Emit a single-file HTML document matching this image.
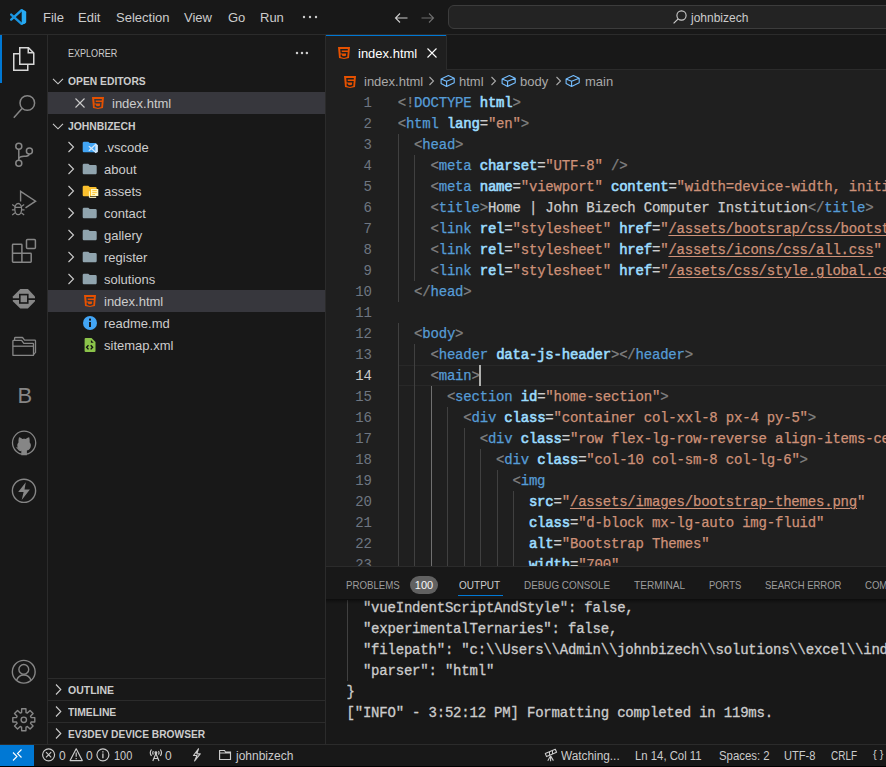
<!DOCTYPE html>
<html><head><meta charset="utf-8">
<style>
*{margin:0;padding:0;box-sizing:border-box}
html,body{width:886px;height:767px;overflow:hidden;background:#000}
body{position:relative;font-family:"Liberation Sans",sans-serif;font-size:13px;color:#cccccc}
.a{position:absolute}
#title{left:0;top:0;width:886px;height:34px;background:#181818}
#tb-border{left:0;top:34px;width:886px;height:1px;background:#2b2b2b}
#act{left:0;top:35px;width:47px;height:709px;background:#181818}
#act-border{left:47px;top:35px;width:1px;height:709px;background:#2b2b2b}
#side{left:48px;top:35px;width:277px;height:709px;background:#181818}
#side-border{left:325px;top:35px;width:1px;height:709px;background:#2b2b2b}
#editor{left:326px;top:35px;width:560px;height:531px;background:#1f1f1f}
#panel{left:326px;top:566px;width:560px;height:178px;background:#181818;border-top:1px solid #2b2b2b}
#status{left:0;top:744px;width:886px;height:22px;background:#181818;border-top:1px solid #2b2b2b}
#bottom{left:0;top:766px;width:886px;height:1px;background:#000}
.menu{top:1px;height:34px;line-height:34px;font-size:13px;color:#cccccc}
.sh{transform-origin:0 50%;font-size:11px;font-weight:bold;height:22px;line-height:22px;color:#cccccc;white-space:nowrap}
.row{height:22px;line-height:24px;font-size:13px;color:#cccccc;white-space:nowrap}
.code{-webkit-text-stroke-width:0.25px;font-size:14px;letter-spacing:-0.2px;line-height:21px;white-space:pre}
.cl{height:21px;white-space:pre}
.pt{transform-origin:0 50%;top:568px;height:35px;line-height:35px;font-size:11px;white-space:nowrap}
.st{transform-origin:0 50%;top:746px;height:21px;line-height:21px;font-size:12px;color:#cccccc;white-space:nowrap}
.mono{font-family:"Liberation Mono",monospace}
</style></head><body>
<div id="title" class="a"></div>
<div id="tb-border" class="a"></div>
<div id="act" class="a"></div>
<div id="act-border" class="a"></div>
<div id="side" class="a"></div>
<div id="side-border" class="a"></div>
<div id="editor" class="a"></div>
<div id="panel" class="a"></div>
<div id="status" class="a"></div>
<div id="bottom" class="a"></div>
<!-- TITLE BAR -->
<svg class="a" style="left:0;top:0" width="34" height="34" viewBox="0 0 34 34">
<path d="M21.6 10.2 11.2 19.6" stroke="#1d9ce8" stroke-width="2.4" stroke-linecap="round"/>
<path d="M21.6 23.8 11.2 14.6" stroke="#1a94e0" stroke-width="2.4" stroke-linecap="round"/>
<path d="M21.7 9.1 25.4 10.9Q26.2 11.3 26.2 12.2V22Q26.2 22.9 25.4 23.3L21.7 25.1Z" fill="#27aaf3"/>
</svg>
<div class="a menu" style="left:43px">File</div>
<div class="a menu" style="left:78px">Edit</div>
<div class="a menu" style="left:116px">Selection</div>
<div class="a menu" style="left:184px">View</div>
<div class="a menu" style="left:228px">Go</div>
<div class="a menu" style="left:260px">Run</div>
<svg class="a" style="left:302px;top:15px" width="16" height="4"><circle cx="2" cy="2" r="1.2" fill="#cccccc"/><circle cx="8" cy="2" r="1.2" fill="#cccccc"/><circle cx="14" cy="2" r="1.2" fill="#cccccc"/></svg>
<svg class="a" style="left:393px;top:10px" width="16" height="16" viewBox="0 0 16 16"><path d="M2.5 8h12M7 3.5 2.5 8 7 12.5" stroke="#cccccc" stroke-width="1.1" fill="none"/></svg>
<svg class="a" style="left:420px;top:10px" width="16" height="16" viewBox="0 0 16 16"><path d="M1.5 8h12M9 3.5 13.5 8 9 12.5" stroke="#6e6e6e" stroke-width="1.1" fill="none"/></svg>
<div class="a" style="left:448px;top:5px;width:560px;height:24px;border:1px solid #3c3c3c;border-radius:6px;background:#232323"></div>
<svg class="a" style="left:672px;top:9px" width="16" height="16" viewBox="0 0 16 16"><circle cx="9.5" cy="6.5" r="4.6" stroke="#cccccc" stroke-width="1.1" fill="none"/><path d="M6.2 9.8 1.6 14.4" stroke="#cccccc" stroke-width="1.2"/></svg>
<div class="a menu" style="left:691px;top:1px;height:34px;line-height:34px;font-size:12px">johnbizech</div>
<!-- ACTIVITY BAR -->
<div class="a" style="left:0;top:35px;width:2px;height:48px;background:#0078d4"></div>
<svg class="a" style="left:0;top:0" width="47" height="744" viewBox="0 0 47 744" fill="none" stroke="#868686" stroke-width="1.5">
<g stroke="#d7d7d7">
<path d="M19.75 64.25V47.75H28.5L33.75 53V64.25Z"/>
<path d="M28.25 47.75V52.75H33.75"/>
<path d="M19.75 53.75H13.75V70.25H27.75V64.25"/>
</g>
<circle cx="27.3" cy="103" r="7.3"/>
<path d="M22 108.5 13.8 117.8"/>
<circle cx="18.8" cy="146.3" r="3"/>
<circle cx="29.4" cy="151" r="3"/>
<circle cx="18.8" cy="163.2" r="3"/>
<path d="M18.8 149.3V160.2"/>
<path d="M18.8 158.5C19.5 156.8 21 156.3 24 156.3 27 156.3 29 155.5 29.4 154"/>
<path d="M20.6 201.5V191.3L35.6 201.2 25.5 207.8" stroke-width="1.4"/>
<ellipse cx="18.2" cy="209.1" rx="3.4" ry="5.6" stroke-width="1.3"/>
<path d="M14.9 207.4H21.5M12.2 204.4 15.1 206.4M24.2 204.4 21.3 206.4M11.9 209.8H14.8M24.5 209.8H21.6M12.2 214.9 15.1 212.7M24.2 214.9 21.3 212.7" stroke-width="1.2"/>
<path d="M13.2 244.3H21.2Q21.9 244.3 21.9 245V253.3H30.5Q31.2 253.3 31.2 254V261.6Q31.2 262.3 30.5 262.3H13.2Q12.5 262.3 12.5 261.6V245Q12.5 244.3 13.2 244.3ZM12.5 253.3H21.9V262.3"/>
<rect x="26.5" y="239.6" width="8.9" height="8.9" rx="1"/>
<g fill="#868686" stroke="none">
<path d="M20.3 289.1H27.9L35 296.6V298.3H12.8V296.6Z"/>
<path d="M12.8 299.9H35V301.2L27.9 308.5H20.3L12.8 301.2Z"/>
</g>
<rect x="19.8" y="294.6" width="8" height="8.4" fill="#868686" stroke="#181818" stroke-width="1.6"/>
<path d="M12.9 355.3V341.2Q12.9 340.4 13.7 340.4H21.6L23.8 343.3H32.7Q33.5 343.3 33.5 344.1V355.3Z" stroke-width="1.3" stroke-linejoin="round"/>
<path d="M12.9 346.2H33.5" stroke-width="1.3"/>
<path d="M14.6 340.2V338.3Q14.6 337.5 15.4 337.5H22.5L24.6 340.1H34.7Q35.5 340.1 35.5 340.9V352.4L33.5 354.6" stroke-width="1.3" stroke-linejoin="round"/>
<circle cx="24.1" cy="442.8" r="11.6" stroke-width="1.3"/>
<path fill="#868686" stroke="none" d="M21.3 455.2V450.6C18.8 450 17.3 448.2 17.3 445.5 17.3 444.2 17.8 443 18.6 442.2 18.4 441.3 18.4 439.7 19 437.2 20.5 437.5 21.7 438.3 22.4 439 23.5 438.7 24.7 438.7 25.8 439 26.5 438.3 27.7 437.5 29.2 437.2 29.8 439.7 29.8 441.3 29.6 442.2 30.4 443 30.9 444.2 30.9 445.5 30.9 448.2 29.4 450 26.9 450.6V455.2Z"/>
<path d="M16.5 447.5C18 447.8 18.5 449.5 19.5 450.2 20.2 450.6 21 450.6 21.5 450.5" stroke-width="1.2"/>
<circle cx="24" cy="490.8" r="11.6" stroke-width="1.4"/>
<path fill="#868686" stroke="none" d="M25.8 482.2 18.2 491.9H23.6L21.7 500.1 29.9 489.6H24.5Z"/>
<circle cx="23.75" cy="671.75" r="11.4" stroke-width="1.4"/>
<circle cx="23.8" cy="669.4" r="4.9" stroke-width="1.4"/>
<path d="M16.6 680.3C17.8 677 20.4 675 23.8 675 27.2 675 29.8 677 31 680.3" stroke-width="1.4"/>
<path stroke-width="1.4" stroke-linejoin="round" d="M21.58 712.53 L21.66 708.81 L25.94 708.81 L26.02 712.53 L27.37 713.09 L30.06 710.51 L33.09 713.54 L30.51 716.23 L31.07 717.58 L34.79 717.66 L34.79 721.94 L31.07 722.02 L30.51 723.37 L33.09 726.06 L30.06 729.09 L27.37 726.51 L26.02 727.07 L25.94 730.79 L21.66 730.79 L21.58 727.07 L20.23 726.51 L17.54 729.09 L14.51 726.06 L17.09 723.37 L16.53 722.02 L12.81 721.94 L12.81 717.66 L16.53 717.58 L17.09 716.23 L14.51 713.54 L17.54 710.51 L20.23 713.09Z"/>
<circle cx="23.8" cy="719.8" r="2.7" stroke-width="1.4"/>
</svg>
<div class="a" style="left:17.5px;top:380.5px;font-size:22px;line-height:30px;color:#868686">B</div>
<!-- SIDEBAR -->
<div class="a sh" style="left:68px;top:35px;height:35px;line-height:36px;font-weight:normal;transform:scaleX(0.822)">EXPLORER</div>
<svg class="a" style="left:294px;top:51px" width="16" height="4"><circle cx="3" cy="2" r="1.25" fill="#cccccc"/><circle cx="8" cy="2" r="1.25" fill="#cccccc"/><circle cx="12.9" cy="2" r="1.25" fill="#cccccc"/></svg>
<svg class="a" style="left:52px;top:77px" width="12" height="8" viewBox="0 0 12 8"><path d="M1 1.8 6 6.8 11 1.8" stroke="#cccccc" stroke-width="1.1" fill="none"/></svg>
<div class="a sh" style="left:68px;top:70px;transform:scaleX(0.937)">OPEN EDITORS</div>
<div class="a" style="left:48px;top:92px;width:277px;height:22px;background:#37373d"></div>
<svg class="a" style="left:74px;top:97px" width="12" height="12" viewBox="0 0 12 12"><path d="M1.5 1.5 10.5 10.5M10.5 1.5 1.5 10.5" stroke="#cccccc" stroke-width="1.1"/></svg>
<svg class="a" style="left:90px;top:95px" width="16" height="16" viewBox="0 0 32 32"><path fill="#e65100" d="m4 4 2 22 10 2 10-2 2-22Zm19.72 7H11.28l.29 3h11.86l-.88 9.98L16 25.93l-6.54-1.95L9.02 19h2.93l.22 2.42L16 22.7l3.84-1.28.4-4.42H9.28l-.87-9H23.6Z"/></svg>
<div class="a row" style="left:112px;top:92px">index.html</div>
<svg class="a" style="left:52px;top:122px" width="12" height="8" viewBox="0 0 12 8"><path d="M1 1.8 6 6.8 11 1.8" stroke="#cccccc" stroke-width="1.1" fill="none"/></svg>
<div class="a sh" style="left:68px;top:115px;transform:scaleX(0.944)">JOHNBIZECH</div>

<svg class="a" style="left:0;top:0" width="326" height="744" viewBox="0 0 326 744">
<g stroke="#cccccc" stroke-width="1.1" fill="none">
<path d="M68.5 142 73.5 147 68.5 152"/>
<path d="M68.5 164 73.5 169 68.5 174"/>
<path d="M68.5 186 73.5 191 68.5 196"/>
<path d="M68.5 208 73.5 213 68.5 218"/>
<path d="M68.5 230 73.5 235 68.5 240"/>
<path d="M68.5 252 73.5 257 68.5 262"/>
<path d="M68.5 274 73.5 279 68.5 284"/>
<path d="M56 684.5 60.8 689.5 56 694.5"/>
<path d="M56 706.5 60.8 711.5 56 716.5"/>
<path d="M56 728.5 60.8 733.5 56 738.5"/>
</g>
<g transform="translate(81.3 139) scale(0.7 0.6667)"><path d="M10 4H4c-1.11 0-2 .89-2 2v12c0 1.097.903 2 2 2h16c1.097 0 2-.903 2-2V8a2 2 0 0 0-2-2h-8l-2-2z" fill="#42a5f5"/></g><path d="M95.6 144.6 89.2 150.4M95.6 152.2 89.2 146.6" stroke="#cfe6fb" stroke-width="1.3" stroke-linecap="round"/><path d="M95.3 143.6 97.9 144.9V151.9L95.3 153.2Z" fill="#cfe6fb"/>
<g transform="translate(81.3 161) scale(0.7 0.6667)"><path d="M10 4H4c-1.11 0-2 .89-2 2v12c0 1.097.903 2 2 2h16c1.097 0 2-.903 2-2V8a2 2 0 0 0-2-2h-8l-2-2z" fill="#90a4ae"/></g>
<g transform="translate(81.3 183) scale(0.7 0.6667)"><path d="M10 4H4c-1.11 0-2 .89-2 2v12c0 1.097.903 2 2 2h16c1.097 0 2-.903 2-2V8a2 2 0 0 0-2-2h-8l-2-2z" fill="#fbc02d"/></g><rect x="91" y="189" width="7.3" height="7" fill="#fff9c4"/><path d="M92.3 190.6H96.8M92.3 192.6H96.8M92.3 194.5H95" stroke="#fbc02d" stroke-width="0.9"/><path d="M89.4 191.2V197.4H96.2" stroke="#fff9c4" stroke-width="1" fill="none"/>
<g transform="translate(81.3 205) scale(0.7 0.6667)"><path d="M10 4H4c-1.11 0-2 .89-2 2v12c0 1.097.903 2 2 2h16c1.097 0 2-.903 2-2V8a2 2 0 0 0-2-2h-8l-2-2z" fill="#90a4ae"/></g>
<g transform="translate(81.3 227) scale(0.7 0.6667)"><path d="M10 4H4c-1.11 0-2 .89-2 2v12c0 1.097.903 2 2 2h16c1.097 0 2-.903 2-2V8a2 2 0 0 0-2-2h-8l-2-2z" fill="#90a4ae"/></g>
<g transform="translate(81.3 249) scale(0.7 0.6667)"><path d="M10 4H4c-1.11 0-2 .89-2 2v12c0 1.097.903 2 2 2h16c1.097 0 2-.903 2-2V8a2 2 0 0 0-2-2h-8l-2-2z" fill="#90a4ae"/></g>
<g transform="translate(81.3 271) scale(0.7 0.6667)"><path d="M10 4H4c-1.11 0-2 .89-2 2v12c0 1.097.903 2 2 2h16c1.097 0 2-.903 2-2V8a2 2 0 0 0-2-2h-8l-2-2z" fill="#90a4ae"/></g>
</g>
<rect x="48" y="290" width="277" height="22" fill="#37373d"/>
<g transform="translate(82 293) scale(0.5)"><path fill="#e65100" d="m4 4 2 22 10 2 10-2 2-22Zm19.72 7H11.28l.29 3h11.86l-.88 9.98L16 25.93l-6.54-1.95L9.02 19h2.93l.22 2.42L16 22.7l3.84-1.28.4-4.42H9.28l-.87-9H23.6Z"/></g>
<circle cx="90" cy="323" r="7" fill="#42a5f5"/>
<rect x="89" y="322" width="2" height="5" fill="#181818"/><rect x="89" y="318.6" width="2" height="2" fill="#181818"/>
<path d="M84.6 339Q84.6 338 85.6 338H91.5L95.5 342V350.9Q95.5 351.9 94.5 351.9H85.6Q84.6 351.9 84.6 350.9Z" fill="#8bc34a"/>
<path d="M90.9 340.1V342.8H93.7Z" fill="#141414"/>
<path d="M88.5 345.2 86.6 347.3 88.5 349.4M90.7 345.2 92.6 347.3 90.7 349.4" stroke="#141414" stroke-width="1.4" fill="none"/>
<g fill="#2b2b2b"><rect x="48" y="678" width="277" height="1"/><rect x="48" y="700" width="277" height="1"/><rect x="48" y="722" width="277" height="1"/></g>
</svg>
<div class="a row" style="left:104px;top:136px">.vscode</div>
<div class="a row" style="left:104px;top:158px">about</div>
<div class="a row" style="left:104px;top:180px">assets</div>
<div class="a row" style="left:104px;top:202px">contact</div>
<div class="a row" style="left:104px;top:224px">gallery</div>
<div class="a row" style="left:104px;top:246px">register</div>
<div class="a row" style="left:104px;top:268px">solutions</div>
<div class="a row" style="left:104px;top:290px">index.html</div>
<div class="a row" style="left:104px;top:312px">readme.md</div>
<div class="a row" style="left:104px;top:334px">sitemap.xml</div>
<div class="a sh" style="left:68px;top:679px;transform:scaleX(0.954)">OUTLINE</div>
<div class="a sh" style="left:68px;top:701px;transform:scaleX(0.94)">TIMELINE</div>
<div class="a sh" style="left:68px;top:723px;transform:scaleX(0.927)">EV3DEV DEVICE BROWSER</div>
<!-- EDITOR -->
<div class="a" style="left:326px;top:69px;width:560px;height:1px;background:#2b2b2b"></div>
<div class="a" style="left:326px;top:35px;width:120px;height:35px;background:#1f1f1f;border-top:1px solid #0078d4"></div>
<div class="a" style="left:446px;top:35px;width:1px;height:34px;background:#2b2b2b"></div>
<div class="a" style="left:447px;top:35px;width:439px;height:34px;background:#181818"></div>
<svg class="a" style="left:336px;top:45px" width="16" height="16" viewBox="0 0 32 32"><path fill="#e65100" d="m4 4 2 22 10 2 10-2 2-22Zm19.72 7H11.28l.29 3h11.86l-.88 9.98L16 25.93l-6.54-1.95L9.02 19h2.93l.22 2.42L16 22.7l3.84-1.28.4-4.42H9.28l-.87-9H23.6Z"/></svg>
<div class="a" style="left:358px;top:36px;height:35px;line-height:35px;color:#ffffff">index.html</div>
<svg class="a" style="left:426px;top:47px" width="12" height="12" viewBox="0 0 12 12"><path d="M1.5 1.5 10.5 10.5M10.5 1.5 1.5 10.5" stroke="#ffffff" stroke-width="1.1"/></svg>
<svg class="a" style="left:342px;top:74px" width="16" height="16" viewBox="0 0 32 32"><path fill="#e65100" d="m4 4 2 22 10 2 10-2 2-22Zm19.72 7H11.28l.29 3h11.86l-.88 9.98L16 25.93l-6.54-1.95L9.02 19h2.93l.22 2.42L16 22.7l3.84-1.28.4-4.42H9.28l-.87-9H23.6Z"/></svg>
<div class="a" style="left:364px;top:71px;height:22px;line-height:22px;color:#a9a9a9">index.html</div>
<svg class="a" style="left:428px;top:76px" width="8" height="10" viewBox="0 0 8 10"><path d="M1.5 1 5.5 5 1.5 9" stroke="#a9a9a9" stroke-width="1.1" fill="none"/></svg>
<svg class="a" style="left:440px;top:74px" width="16" height="15" viewBox="0 0 16 15"><path d="M8.4 1.6 14.2 4.3V8.7L6.6 12.4 1.1 9.6V4.9Z M1.1 4.9 6.6 7.3 14.2 4.3 M6.6 7.3V12.4" stroke="#75beff" stroke-width="1.1" fill="none" stroke-linejoin="round"/></svg>
<div class="a" style="left:459px;top:71px;height:22px;line-height:22px;color:#a9a9a9">html</div>
<svg class="a" style="left:490px;top:76px" width="8" height="10" viewBox="0 0 8 10"><path d="M1.5 1 5.5 5 1.5 9" stroke="#a9a9a9" stroke-width="1.1" fill="none"/></svg>
<svg class="a" style="left:501px;top:74px" width="16" height="15" viewBox="0 0 16 15"><path d="M8.4 1.6 14.2 4.3V8.7L6.6 12.4 1.1 9.6V4.9Z M1.1 4.9 6.6 7.3 14.2 4.3 M6.6 7.3V12.4" stroke="#75beff" stroke-width="1.1" fill="none" stroke-linejoin="round"/></svg>
<div class="a" style="left:520px;top:71px;height:22px;line-height:22px;color:#a9a9a9">body</div>
<svg class="a" style="left:555px;top:76px" width="8" height="10" viewBox="0 0 8 10"><path d="M1.5 1 5.5 5 1.5 9" stroke="#a9a9a9" stroke-width="1.1" fill="none"/></svg>
<svg class="a" style="left:565px;top:74px" width="16" height="15" viewBox="0 0 16 15"><path d="M8.4 1.6 14.2 4.3V8.7L6.6 12.4 1.1 9.6V4.9Z M1.1 4.9 6.6 7.3 14.2 4.3 M6.6 7.3V12.4" stroke="#75beff" stroke-width="1.1" fill="none" stroke-linejoin="round"/></svg>
<div class="a" style="left:585px;top:71px;height:22px;line-height:22px;color:#a9a9a9">main</div>
<div class="a" style="left:0;top:0;width:886px;height:566px;overflow:hidden">
<div class="a" style="left:399px;top:365px;width:487px;height:21px;border:1px solid #282828;border-right:none;border-left:none"></div>
<div class="a" style="left:398px;top:134px;width:1px;height:168px;background:#404040"></div>
<div class="a" style="left:414px;top:155px;width:1px;height:126px;background:#404040"></div>
<div class="a" style="left:398px;top:323px;width:1px;height:252px;background:#404040"></div>
<div class="a" style="left:414px;top:344px;width:1px;height:231px;background:#404040"></div>
<div class="a" style="left:431px;top:386px;width:1px;height:189px;background:#707070"></div>
<div class="a" style="left:447px;top:407px;width:1px;height:168px;background:#404040"></div>
<div class="a" style="left:464px;top:428px;width:1px;height:147px;background:#404040"></div>
<div class="a" style="left:480px;top:449px;width:1px;height:126px;background:#404040"></div>
<div class="a" style="left:497px;top:470px;width:1px;height:105px;background:#404040"></div>
<div class="a" style="left:513px;top:491px;width:1px;height:84px;background:#404040"></div>
<div class="a mono code" style="right:514.4px;top:93px;color:#6e7681;text-align:right;-webkit-text-stroke-width:0">1</div>
<div class="a mono code" style="right:514.4px;top:114px;color:#6e7681;text-align:right;-webkit-text-stroke-width:0">2</div>
<div class="a mono code" style="right:514.4px;top:135px;color:#6e7681;text-align:right;-webkit-text-stroke-width:0">3</div>
<div class="a mono code" style="right:514.4px;top:156px;color:#6e7681;text-align:right;-webkit-text-stroke-width:0">4</div>
<div class="a mono code" style="right:514.4px;top:177px;color:#6e7681;text-align:right;-webkit-text-stroke-width:0">5</div>
<div class="a mono code" style="right:514.4px;top:198px;color:#6e7681;text-align:right;-webkit-text-stroke-width:0">6</div>
<div class="a mono code" style="right:514.4px;top:219px;color:#6e7681;text-align:right;-webkit-text-stroke-width:0">7</div>
<div class="a mono code" style="right:514.4px;top:240px;color:#6e7681;text-align:right;-webkit-text-stroke-width:0">8</div>
<div class="a mono code" style="right:514.4px;top:261px;color:#6e7681;text-align:right;-webkit-text-stroke-width:0">9</div>
<div class="a mono code" style="right:514.4px;top:282px;color:#6e7681;text-align:right;-webkit-text-stroke-width:0">10</div>
<div class="a mono code" style="right:514.4px;top:303px;color:#6e7681;text-align:right;-webkit-text-stroke-width:0">11</div>
<div class="a mono code" style="right:514.4px;top:324px;color:#6e7681;text-align:right;-webkit-text-stroke-width:0">12</div>
<div class="a mono code" style="right:514.4px;top:345px;color:#6e7681;text-align:right;-webkit-text-stroke-width:0">13</div>
<div class="a mono code" style="right:514.4px;top:366px;color:#cccccc;text-align:right;-webkit-text-stroke-width:0">14</div>
<div class="a mono code" style="right:514.4px;top:387px;color:#6e7681;text-align:right;-webkit-text-stroke-width:0">15</div>
<div class="a mono code" style="right:514.4px;top:408px;color:#6e7681;text-align:right;-webkit-text-stroke-width:0">16</div>
<div class="a mono code" style="right:514.4px;top:429px;color:#6e7681;text-align:right;-webkit-text-stroke-width:0">17</div>
<div class="a mono code" style="right:514.4px;top:450px;color:#6e7681;text-align:right;-webkit-text-stroke-width:0">18</div>
<div class="a mono code" style="right:514.4px;top:471px;color:#6e7681;text-align:right;-webkit-text-stroke-width:0">19</div>
<div class="a mono code" style="right:514.4px;top:492px;color:#6e7681;text-align:right;-webkit-text-stroke-width:0">20</div>
<div class="a mono code" style="right:514.4px;top:513px;color:#6e7681;text-align:right;-webkit-text-stroke-width:0">21</div>
<div class="a mono code" style="right:514.4px;top:534px;color:#6e7681;text-align:right;-webkit-text-stroke-width:0">22</div>
<div class="a mono code" style="right:514.4px;top:555px;color:#6e7681;text-align:right;-webkit-text-stroke-width:0">23</div>
<div class="a mono code" style="left:397.7px;top:93px;width:488px;height:473px;overflow:hidden"><div class="cl"><span style="color:#808080">&lt;!</span><span style="color:#569cd6">DOCTYPE</span><span style="color:#cccccc"> </span><span style="color:#9cdcfe;-webkit-text-stroke:0.6px #9cdcfe">html</span><span style="color:#808080">&gt;</span></div><div class="cl"><span style="color:#808080">&lt;</span><span style="color:#569cd6">html</span><span style="color:#cccccc"> </span><span style="color:#9cdcfe;-webkit-text-stroke:0.6px #9cdcfe">lang</span><span style="color:#cccccc">=</span><span style="color:#ce9178">&quot;en&quot;</span><span style="color:#808080">&gt;</span></div><div class="cl">  <span style="color:#808080">&lt;</span><span style="color:#569cd6">head</span><span style="color:#808080">&gt;</span></div><div class="cl">    <span style="color:#808080">&lt;</span><span style="color:#569cd6">meta</span><span style="color:#cccccc"> </span><span style="color:#9cdcfe;-webkit-text-stroke:0.6px #9cdcfe">charset</span><span style="color:#cccccc">=</span><span style="color:#ce9178">&quot;UTF-8&quot;</span><span style="color:#808080"> /&gt;</span></div><div class="cl">    <span style="color:#808080">&lt;</span><span style="color:#569cd6">meta</span><span style="color:#cccccc"> </span><span style="color:#9cdcfe;-webkit-text-stroke:0.6px #9cdcfe">name</span><span style="color:#cccccc">=</span><span style="color:#ce9178">&quot;viewport&quot;</span><span style="color:#cccccc"> </span><span style="color:#9cdcfe;-webkit-text-stroke:0.6px #9cdcfe">content</span><span style="color:#cccccc">=</span><span style="color:#ce9178">&quot;width=device-width, initial-scale=1.0&quot;</span><span style="color:#808080"> /&gt;</span></div><div class="cl">    <span style="color:#808080">&lt;</span><span style="color:#569cd6">title</span><span style="color:#808080">&gt;</span><span style="color:#cccccc">Home | John Bizech Computer Institution</span><span style="color:#808080">&lt;/</span><span style="color:#569cd6">title</span><span style="color:#808080">&gt;</span></div><div class="cl">    <span style="color:#808080">&lt;</span><span style="color:#569cd6">link</span><span style="color:#cccccc"> </span><span style="color:#9cdcfe;-webkit-text-stroke:0.6px #9cdcfe">rel</span><span style="color:#cccccc">=</span><span style="color:#ce9178">&quot;stylesheet&quot;</span><span style="color:#cccccc"> </span><span style="color:#9cdcfe;-webkit-text-stroke:0.6px #9cdcfe">href</span><span style="color:#cccccc">=</span><span style="color:#ce9178">&quot;</span><span style="color:#ce9178;text-decoration:underline;text-underline-offset:2px">/assets/bootsrap/css/bootstrap.min.css</span><span style="color:#ce9178">&quot;</span><span style="color:#808080"> /&gt;</span></div><div class="cl">    <span style="color:#808080">&lt;</span><span style="color:#569cd6">link</span><span style="color:#cccccc"> </span><span style="color:#9cdcfe;-webkit-text-stroke:0.6px #9cdcfe">rel</span><span style="color:#cccccc">=</span><span style="color:#ce9178">&quot;stylesheet&quot;</span><span style="color:#cccccc"> </span><span style="color:#9cdcfe;-webkit-text-stroke:0.6px #9cdcfe">href</span><span style="color:#cccccc">=</span><span style="color:#ce9178">&quot;</span><span style="color:#ce9178;text-decoration:underline;text-underline-offset:2px">/assets/icons/css/all.css</span><span style="color:#ce9178">&quot;</span><span style="color:#808080"> /&gt;</span></div><div class="cl">    <span style="color:#808080">&lt;</span><span style="color:#569cd6">link</span><span style="color:#cccccc"> </span><span style="color:#9cdcfe;-webkit-text-stroke:0.6px #9cdcfe">rel</span><span style="color:#cccccc">=</span><span style="color:#ce9178">&quot;stylesheet&quot;</span><span style="color:#cccccc"> </span><span style="color:#9cdcfe;-webkit-text-stroke:0.6px #9cdcfe">href</span><span style="color:#cccccc">=</span><span style="color:#ce9178">&quot;</span><span style="color:#ce9178;text-decoration:underline;text-underline-offset:2px">/assets/css/style.global.css</span><span style="color:#ce9178">&quot;</span><span style="color:#808080"> /&gt;</span></div><div class="cl">  <span style="color:#808080">&lt;/</span><span style="color:#569cd6">head</span><span style="color:#808080">&gt;</span></div><div class="cl">&nbsp;</div><div class="cl">  <span style="color:#808080">&lt;</span><span style="color:#569cd6">body</span><span style="color:#808080">&gt;</span></div><div class="cl">    <span style="color:#808080">&lt;</span><span style="color:#569cd6">header</span><span style="color:#cccccc"> </span><span style="color:#9cdcfe;-webkit-text-stroke:0.6px #9cdcfe">data-js-header</span><span style="color:#808080">&gt;&lt;/</span><span style="color:#569cd6">header</span><span style="color:#808080">&gt;</span></div><div class="cl">    <span style="color:#808080">&lt;</span><span style="color:#569cd6">main</span><span style="color:#808080">&gt;</span></div><div class="cl">      <span style="color:#808080">&lt;</span><span style="color:#569cd6">section</span><span style="color:#cccccc"> </span><span style="color:#9cdcfe;-webkit-text-stroke:0.6px #9cdcfe">id</span><span style="color:#cccccc">=</span><span style="color:#ce9178">&quot;home-section&quot;</span><span style="color:#808080">&gt;</span></div><div class="cl">        <span style="color:#808080">&lt;</span><span style="color:#569cd6">div</span><span style="color:#cccccc"> </span><span style="color:#9cdcfe;-webkit-text-stroke:0.6px #9cdcfe">class</span><span style="color:#cccccc">=</span><span style="color:#ce9178">&quot;container col-xxl-8 px-4 py-5&quot;</span><span style="color:#808080">&gt;</span></div><div class="cl">          <span style="color:#808080">&lt;</span><span style="color:#569cd6">div</span><span style="color:#cccccc"> </span><span style="color:#9cdcfe;-webkit-text-stroke:0.6px #9cdcfe">class</span><span style="color:#cccccc">=</span><span style="color:#ce9178">&quot;row flex-lg-row-reverse align-items-center g-5 py-5&quot;</span><span style="color:#808080">&gt;</span></div><div class="cl">            <span style="color:#808080">&lt;</span><span style="color:#569cd6">div</span><span style="color:#cccccc"> </span><span style="color:#9cdcfe;-webkit-text-stroke:0.6px #9cdcfe">class</span><span style="color:#cccccc">=</span><span style="color:#ce9178">&quot;col-10 col-sm-8 col-lg-6&quot;</span><span style="color:#808080">&gt;</span></div><div class="cl">              <span style="color:#808080">&lt;</span><span style="color:#569cd6">img</span></div><div class="cl">                <span style="color:#9cdcfe;-webkit-text-stroke:0.6px #9cdcfe">src</span><span style="color:#cccccc">=</span><span style="color:#ce9178">&quot;</span><span style="color:#ce9178;text-decoration:underline;text-underline-offset:2px">/assets/images/bootstrap-themes.png</span><span style="color:#ce9178">&quot;</span></div><div class="cl">                <span style="color:#9cdcfe;-webkit-text-stroke:0.6px #9cdcfe">class</span><span style="color:#cccccc">=</span><span style="color:#ce9178">&quot;d-block mx-lg-auto img-fluid&quot;</span></div><div class="cl">                <span style="color:#9cdcfe;-webkit-text-stroke:0.6px #9cdcfe">alt</span><span style="color:#cccccc">=</span><span style="color:#ce9178">&quot;Bootstrap Themes&quot;</span></div><div class="cl">                <span style="color:#9cdcfe;-webkit-text-stroke:0.6px #9cdcfe">width</span><span style="color:#cccccc">=</span><span style="color:#ce9178">&quot;700&quot;</span></div><div class="cl">                <span style="color:#9cdcfe;-webkit-text-stroke:0.6px #9cdcfe">height</span><span style="color:#cccccc">=</span><span style="color:#ce9178">&quot;500&quot;</span></div></div>
<div class="a" style="left:479px;top:365px;width:2px;height:21px;background:#aeafad"></div>
</div>
<!-- PANEL -->
<div class="a pt" style="left:346px;color:#9d9d9d;transform:scaleX(0.880)">PROBLEMS</div>
<div class="a" style="left:410px;top:576px;width:28px;height:18px;border-radius:9px;background:#616161;color:#f8f8f8;font-size:11px;line-height:18px;text-align:center">100</div>
<div class="a pt" style="left:459px;color:#cccccc;transform:scaleX(0.91)">OUTPUT</div>
<div class="a" style="left:458px;top:595px;width:45px;height:1px;background:#0078d4"></div>
<div class="a pt" style="left:524px;color:#9d9d9d;transform:scaleX(0.897)">DEBUG CONSOLE</div>
<div class="a pt" style="left:634px;color:#9d9d9d;transform:scaleX(0.92)">TERMINAL</div>
<div class="a pt" style="left:709px;color:#9d9d9d;transform:scaleX(0.855)">PORTS</div>
<div class="a pt" style="left:765px;color:#9d9d9d;transform:scaleX(0.862)">SEARCH ERROR</div>
<div class="a pt" style="left:865px;color:#9d9d9d;transform:scaleX(0.87)">COMMENTS</div>
<div class="a" style="left:346.5px;top:600px;width:1px;height:81px;background:#404040"></div>
<div class="a mono code" style="left:346.5px;top:598px;width:540px;height:147px;overflow:hidden;color:#cccccc;-webkit-text-stroke:0.3px #cccccc"><div class="cl">  "vueIndentScriptAndStyle": false,</div><div class="cl">  "experimentalTernaries": false,</div><div class="cl">  "filepath": "c:\\Users\\Admin\\johnbizech\\solutions\\excel\\index.html",</div><div class="cl">  "parser": "html"</div><div class="cl">}</div><div class="cl">["INFO" - 3:52:12 PM] Formatting completed in 119ms.</div></div>
<div class="a" style="left:326px;top:599px;width:560px;height:5px;background:linear-gradient(rgba(0,0,0,0.45),rgba(0,0,0,0))"></div>
<!-- STATUS BAR -->
<div class="a" style="left:0;top:745px;width:34px;height:21px;background:#0078d4"></div>
<svg class="a" style="left:0;top:744px" width="886" height="22" viewBox="0 744 886 22" fill="none" stroke="#cccccc" stroke-width="1.15">
<path d="M13 752.5 17 756.5 13 760.5M21.5 749.5 17.5 753.5 21.5 757.5" stroke="#ffffff" stroke-width="1.1"/>
<circle cx="48.6" cy="754.8" r="6"/>
<path d="M46 752.2 51.2 757.4M51.2 752.2 46 757.4"/>
<path d="M76.2 748.8 82.3 760.6H70.1Z" stroke-linejoin="round"/>
<path d="M76.2 752.5V756.8M76.2 758V759.2"/>
<circle cx="102.9" cy="754.8" r="6"/>
<path d="M102.9 753.5V758.2M102.9 751.2V752.4" stroke-width="1.3"/>
<path d="M155.9 753.5 152.8 761M155.9 753.5 159 761M153.8 758.5H158M151.5 749.5C150 751.5 150 754 151.5 756M160.3 749.5C161.8 751.5 161.8 754 160.3 756M153.3 751C152.5 752.2 152.5 753.5 153.3 754.6M158.5 751C159.3 752.2 159.3 753.5 158.5 754.6"/>
<circle cx="155.9" cy="752.8" r="0.9" fill="#cccccc"/>
<path d="M198.5 748.8 193.5 755.5H197L194.6 761 200.2 753.8H196.8Z" stroke-linejoin="round"/>
<path d="M219.6 750.5H224.5L225.5 752H230.5V759.5H219.6ZM219.6 753H230.5"/>
<path d="M545.3 753.6 555.3 749.2 556.6 752.3 546.6 756.6Z" stroke-linejoin="round" stroke-width="1.1"/>
<path d="M549.5 752V755.3M552.5 750.7V754" stroke-width="1"/>
<path d="M550.6 755.8 547.8 760.8M550.6 755.8V761.2M550.6 755.8 553.4 760.6" stroke-width="1.1"/>
</svg>
<div class="a st" style="left:59px">0</div>
<div class="a st" style="left:86px">0</div>
<div class="a st" style="left:114px;transform:scaleX(0.915)">100</div>
<div class="a st" style="left:165px">0</div>
<div class="a st" style="left:236px">johnbizech</div>
<div class="a st" style="left:560.5px;transform:scaleX(0.985)">Watching...</div>
<div class="a st" style="left:635px;transform:scaleX(0.945)">Ln 14, Col 11</div>
<div class="a st" style="left:718.5px;transform:scaleX(0.95)">Spaces: 2</div>
<div class="a st" style="left:784px;transform:scaleX(0.926)">UTF-8</div>
<div class="a st" style="left:831px;transform:scaleX(0.83)">CRLF</div>
<div class="a st" style="left:873px;top:744px;font-size:11px;transform:scaleX(1)">{ }</div>

</body></html>
